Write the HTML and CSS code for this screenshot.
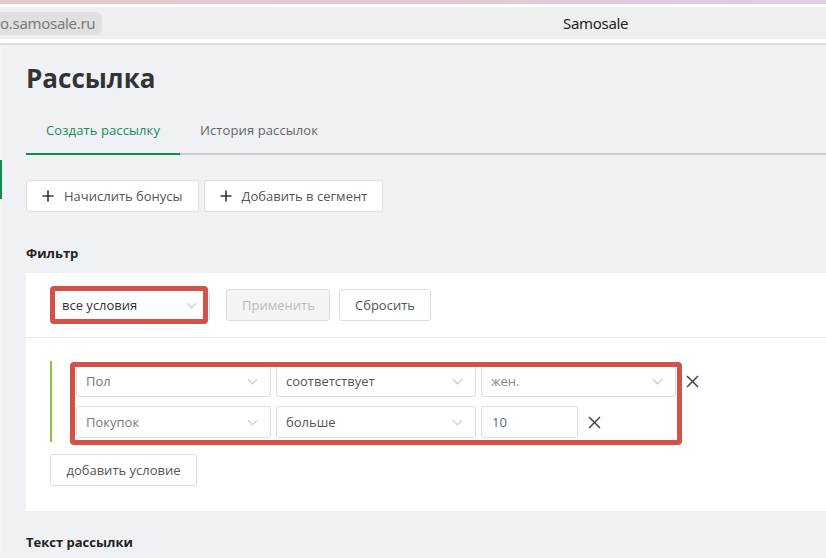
FILE: index.html
```html
<!DOCTYPE html>
<html lang="ru">
<head>
  <meta charset="UTF-8">
  <meta name="viewport" content="width=device-width, initial-scale=1.0">
  <title>Samosale</title>
  <link rel="stylesheet" href="styles.css">
</head>
<body>
  <div class="stripe"></div>
  <div class="chrome">
    <div class="url">o.samosale.ru</div>
    <div class="tab-title">Samosale</div>
  </div>

  <div class="page">
    <div class="rail"><span class="rail-mark"></span></div>
    <div class="content">
      <h1 class="title">Рассылка</h1>

      <div class="tabs">
        <a class="tab active" href="#">Создать рассылку</a>
        <a class="tab" href="#">История рассылок</a>
      </div>

      <div class="actions">
        <button class="btn btn-icon">
          <svg width="12" height="12" viewBox="0 0 12 12"><path d="M6 0.5v11M0.5 6h11" stroke="#333" stroke-width="1.6"/></svg>
          Начислить бонусы
        </button>
        <button class="btn btn-icon">
          <svg width="12" height="12" viewBox="0 0 12 12"><path d="M6 0.5v11M0.5 6h11" stroke="#333" stroke-width="1.6"/></svg>
          Добавить в сегмент
        </button>
      </div>

      <div class="label">Фильтр</div>

      <div class="card">
        <div class="filter-head">
          <div class="select select-main">все условия <span class="chev"></span></div>
          <button class="btn btn-disabled">Применить</button>
          <button class="btn">Сбросить</button>
          <div class="mark mark-head"></div>
        </div>

        <div class="conditions">
          <div class="group">
            <div class="row">
              <div class="select w195">Пол <span class="chev"></span></div>
              <div class="select w200 dark">соответствует <span class="chev"></span></div>
              <div class="select w195 light">жен. <span class="chev"></span></div>
              <span class="remove">
                <svg width="13" height="13" viewBox="0 0 13 13"><path d="M1 1l11 11M12 1L1 12" stroke="#444" stroke-width="1.5"/></svg>
              </span>
            </div>
            <div class="row">
              <div class="select w195">Покупок <span class="chev"></span></div>
              <div class="select w200 dark">больше <span class="chev"></span></div>
              <div class="input">10</div>
              <span class="remove">
                <svg width="13" height="13" viewBox="0 0 13 13"><path d="M1 1l11 11M12 1L1 12" stroke="#444" stroke-width="1.5"/></svg>
              </span>
            </div>
          </div>
          <button class="btn btn-add">добавить условие</button>
          <div class="mark mark-rows"></div>
        </div>
      </div>

      <div class="label label-text">Текст рассылки</div>
    </div>
  </div>
</body>
</html>
```

FILE: styles.css
```css
body {
  margin: 0;
  padding: 0;
  font-family: "Open Sans", "Noto Sans", sans-serif;
  background-color: #f0f1f5;
  color: #333;
  overflow: hidden;
}
.stripe {
  height: 4px;
  background: linear-gradient(90deg, #e9c9cb, #e6c8d3 50%, #e2cde4);
  border-bottom: 3px solid #ffffff;
}
.chrome {
  height: 32px;
  display: flex;
  align-items: center;
  background-color: #efefef;
  border-bottom: 4px solid #ffffff;
  box-shadow: 0 2px 0 #dddddd;
  font-family: "Noto Sans", "Open Sans", sans-serif;
  font-size: 15px;
}
.url {
  width: 102px;
  height: 23px;
  line-height: 23px;
  background-color: #e0e0e0;
  border-radius: 0 6px 6px 0;
  color: #7a7a7a;
  letter-spacing: -0.3px;
  white-space: nowrap;
  overflow: hidden;
}
.tab-title {
  margin-left: 461px;
  color: #222;
  letter-spacing: -0.3px;
}
.page {
  display: flex;
  margin-top: 2px;
}
.rail {
  width: 2px;
  background-color: #f4f4f6;
}
.rail-mark {
  display: block;
  width: 2px;
  height: 39px;
  margin-top: 115px;
  background-color: #0a9150;
}
.content {
  flex: 1;
  padding-left: 24px;
}
.title {
  margin: 15px 0 0;
  font-size: 26px;
  line-height: 36px;
  font-weight: 700;
  color: #333;
}
.tabs {
  display: flex;
  margin-top: 16px;
  border-bottom: 2px solid #cccccc;
}
.tab {
  padding: 8px 20px 13px;
  margin-bottom: -2px;
  font-size: 13px;
  line-height: 20px;
  letter-spacing: 0.1px;
  color: #666;
  text-decoration: none;
  border-bottom: 2px solid transparent;
}
.tab.active {
  color: #1a8a5a;
  border-bottom-color: #0a9150;
}
.actions {
  display: flex;
  gap: 5px;
  margin-top: 25px;
}
.btn {
  height: 32px;
  padding: 0 15px;
  background-color: #ffffff;
  border: 1px solid #dddddd;
  border-radius: 3px;
  font-family: inherit;
  font-size: 13px;
  color: #555;
}
.btn-icon {
  display: flex;
  align-items: center;
  gap: 10px;
  padding: 0 15px;
}
.label {
  margin-top: 32px;
  font-size: 13px;
  line-height: 18px;
  font-weight: 700;
  color: #222;
}
.card {
  margin-top: 11px;
  background-color: #ffffff;
}
.filter-head {
  position: relative;
  display: flex;
  align-items: center;
  height: 64px;
  padding-left: 24px;
  border-bottom: 1px solid #e6e6e6;
}
.select {
  position: relative;
  box-sizing: border-box;
  height: 32px;
  padding-left: 9px;
  line-height: 30px;
  border: 1px solid #dddddd;
  border-radius: 3px;
  font-size: 13px;
  color: #777;
}
.select-main {
  width: 160px;
  margin-right: 16px;
  padding-left: 11px;
  color: #333;
}
.chev {
  position: absolute;
  right: 14px;
  top: 10px;
  width: 6px;
  height: 6px;
  border-right: 1px solid #c4c4c4;
  border-bottom: 1px solid #c4c4c4;
  transform: rotate(45deg);
}
.btn-disabled {
  width: 104px;
  margin-right: 9px;
  background-color: #f4f4f4;
  color: #bbbbbb;
}
.filter-head .btn:last-of-type {
  width: 92px;
}
.conditions {
  position: relative;
  padding: 23px 0 25px 24px;
}
.group {
  display: flex;
  flex-direction: column;
  gap: 9px;
  padding: 4px 0 4px 24px;
  border-left: 2px solid #8cc63f;
}
.row {
  display: flex;
  align-items: center;
  gap: 5px;
}
.w195 {
  width: 195px;
}
.w200 {
  width: 200px;
}
.dark {
  color: #555;
}
.light {
  color: #888;
}
.input {
  box-sizing: border-box;
  width: 97px;
  height: 32px;
  padding-left: 10px;
  line-height: 30px;
  border: 1px solid #dddddd;
  border-radius: 3px;
  font-size: 13px;
  color: #4f6a92;
}
.remove {
  display: flex;
  margin-left: 5px;
}
.btn-add {
  margin-top: 12px;
  width: 147px;
}
.mark {
  position: absolute;
  box-sizing: border-box;
  border: 5px solid #d0524a;
  border-radius: 4px;
}
.mark-head {
  left: 24px;
  top: 13px;
  width: 158px;
  height: 38px;
}
.mark-rows {
  left: 44px;
  top: 24px;
  width: 612px;
  height: 83px;
}
.label-text {
  margin-top: 22px;
}
```
